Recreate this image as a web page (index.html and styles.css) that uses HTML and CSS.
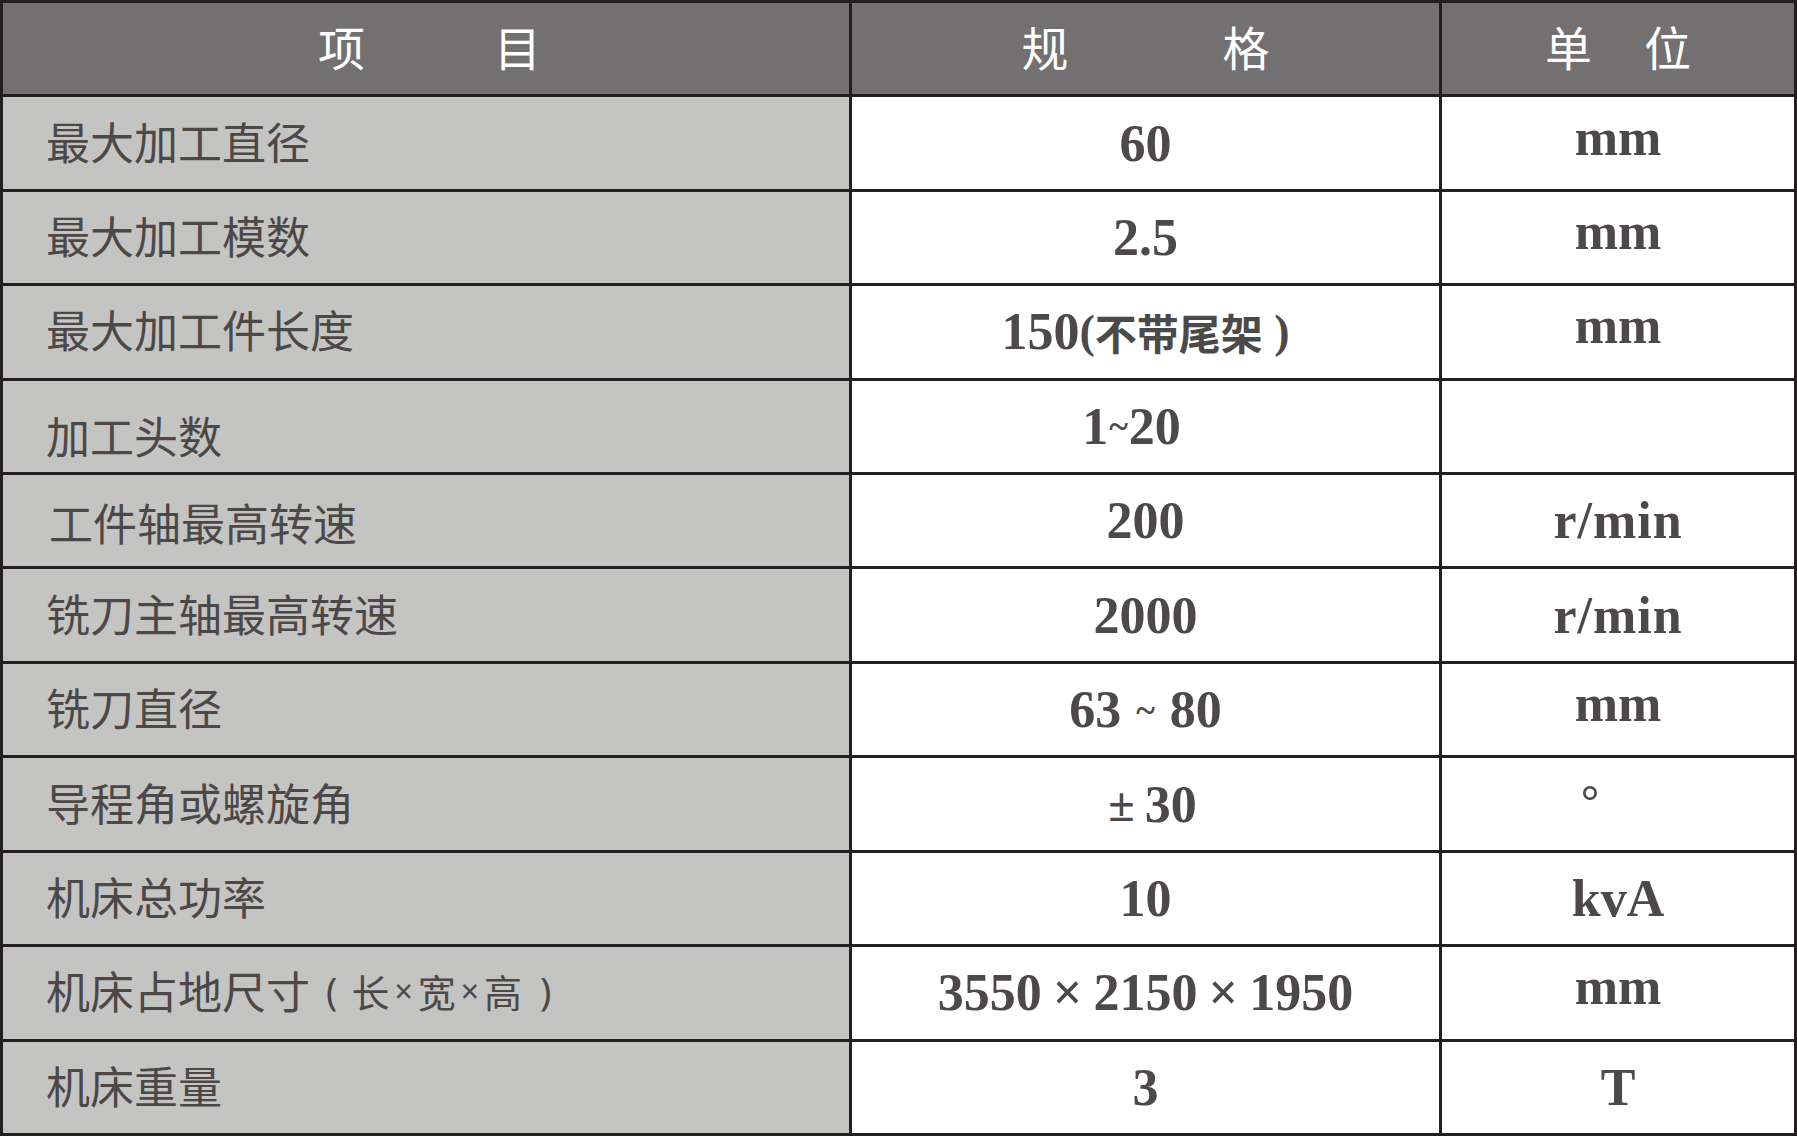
FILE: index.html
```html
<!DOCTYPE html>
<html lang="zh-CN">
<head>
<meta charset="utf-8">
<title>规格表</title>
<link rel="stylesheet" href="styles.css">
</head>
<body>
<div class="table">
  <div class="cell head shift"><span class="hw">项</span><span class="hw gap1">目</span></div>
  <div class="cell head"><span class="hw">规</span><span class="hw gap2">格</span></div>
  <div class="cell head"><span class="hw">单</span><span class="hw gap3">位</span></div>

  <div class="cell item">最大加工直径</div>
  <div class="cell val">60</div>
  <div class="cell unit raise">mm</div>

  <div class="cell item">最大加工模数</div>
  <div class="cell val">2.5</div>
  <div class="cell unit raise">mm</div>

  <div class="cell item">最大加工件长度</div>
  <div class="cell val">150<span class="paren">(</span><span class="cjk">不带尾架</span><span class="paren">&nbsp;)</span></div>
  <div class="cell unit raise">mm</div>

  <div class="cell item low10">加工头数</div>
  <div class="cell val left">1<span class="tilde">~</span>20</div>
  <div class="cell unit"></div>

  <div class="cell item low4">工件轴最高转速</div>
  <div class="cell val">200</div>
  <div class="cell unit spaced">r/min</div>

  <div class="cell item">铣刀主轴最高转速</div>
  <div class="cell val">2000</div>
  <div class="cell unit spaced">r/min</div>

  <div class="cell item">铣刀直径</div>
  <div class="cell val">63<span class="tilde wide">~</span>80</div>
  <div class="cell unit raise">mm</div>

  <div class="cell item">导程角或螺旋角</div>
  <div class="cell val right"><span class="pm">±</span>30</div>
  <div class="cell unit"><span class="deg">°</span></div>

  <div class="cell item">机床总功率</div>
  <div class="cell val">10</div>
  <div class="cell unit">kvA</div>

  <div class="cell item">机床占地尺寸<span class="sp lp">(</span><span class="sm">长</span><span class="x">×</span><span class="sm">宽</span><span class="x">×</span><span class="sm">高</span><span class="sp rp">)</span></div>
  <div class="cell val">3550<span class="times">×</span>2150<span class="times">×</span>1950</div>
  <div class="cell unit raise">mm</div>

  <div class="cell item">机床重量</div>
  <div class="cell val">3</div>
  <div class="cell unit">T</div>
</div>
</body>
</html>
```
FILE: styles.css
```css
html, body {
  margin: 0;
  padding: 0;
  background: #231f20;
}
.table {
  width: 1797px;
  height: 1136px;
  box-sizing: border-box;
  display: grid;
  grid-template-columns: 846px 587px 352px;
  grid-template-rows: repeat(12, 1fr);
  gap: 3px;
  padding: 3px;
  background: #231f20;
}
.cell {
  display: flex;
  align-items: center;
  min-width: 0;
  overflow: hidden;
  box-sizing: border-box;
}
.head {
  background: #727071;
  color: #ffffff;
  justify-content: center;
  font-family: "Noto Sans CJK SC", sans-serif;
  font-size: 47px;
  font-weight: 400;
  padding-bottom: 6px;
}
.head.shift { padding-left: 7px; }
.hw { display: block; line-height: 1; }
.gap1 { margin-left: 129px; }
.gap2 { margin-left: 154px; }
.gap3 { margin-left: 52px; }
.item {
  background: #c4c4c2;
  color: #4d4848;
  font-family: "Noto Sans CJK SC", sans-serif;
  font-size: 44px;
  font-weight: 400;
  padding-left: 43px;
  padding-bottom: 5px;
  white-space: nowrap;
}
.item .sm { font-size: 38px; }
.item .sp { font-family: "Noto Sans", sans-serif; font-size: 38px; }
.item .lp { margin-left: 16px; margin-right: 14px; }
.item .rp { margin-left: 18px; }
.item .x {
  font-family: "Noto Sans", sans-serif;
  font-size: 32px;
  margin: 0 5px;
}
.low10 { padding-top: 22px; }
.low4 { padding-top: 8px; padding-left: 46px; }
.val, .unit {
  background: #ffffff;
  color: #4d4949;
  justify-content: center;
  font-family: "Liberation Serif", "Times New Roman", serif;
  font-weight: 700;
  font-size: 52px;
  white-space: nowrap;
}
.val.left { padding-right: 28px; }
.val.right { padding-left: 14px; }
.raise { padding-bottom: 12px; }
.spaced { letter-spacing: 1px; }
.val .cjk {
  font-family: "Noto Sans CJK SC", sans-serif;
  font-size: 42px;
  font-weight: 700;
}
.val .paren { font-size: 46px; }
.tilde { font-size: 36px; margin: 0 1px; }
.tilde.wide { margin: 0 15px; }
.pm { font-size: 48px; margin-right: 10px; }
.times { font-size: 52px; margin: 0 11px; }
.deg {
  font-family: "Liberation Sans", Arial, sans-serif;
  font-weight: 400;
  font-size: 50px;
  margin-right: 56px;
  line-height: 1;
}
```
